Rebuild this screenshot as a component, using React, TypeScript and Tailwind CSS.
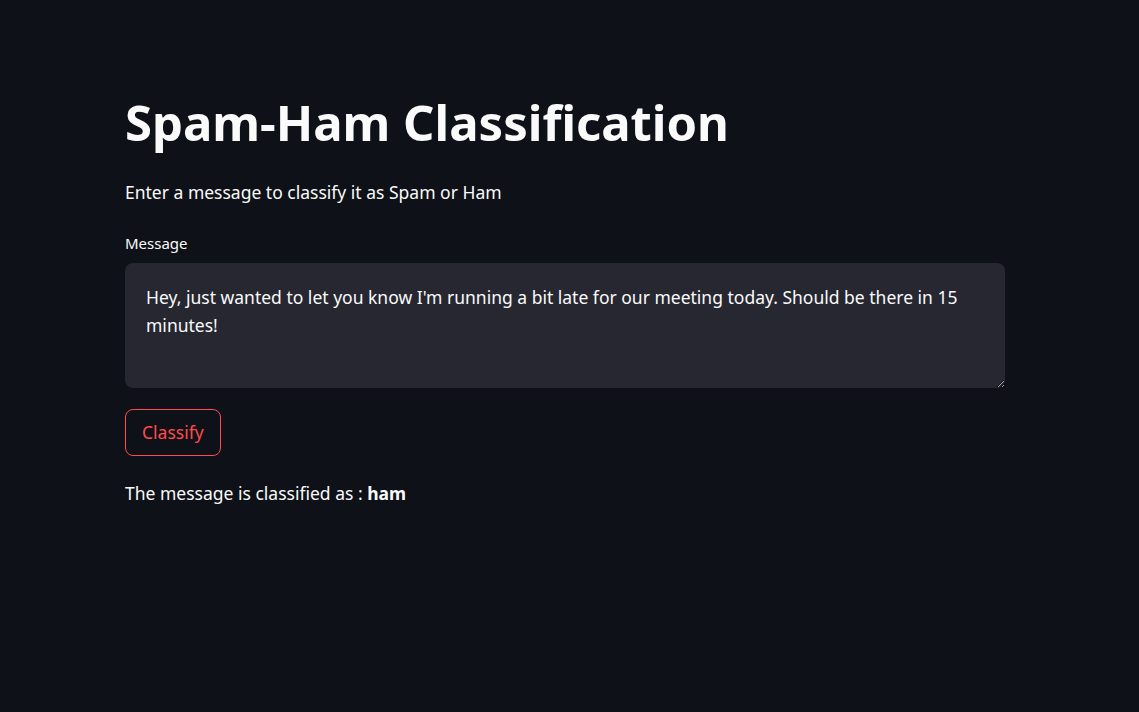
import { useState } from "react";

export default function App() {
    const [message, setMessage] = useState(
        "Hey, just wanted to let you know I'm running a bit late for our meeting today. Should be there in 15 minutes!"
    );

    return (
        <div className="min-h-screen w-full bg-[#0e1117] text-[#fafafa] font-['Noto_Sans','Open_Sans',sans-serif]">
            <div className="w-[880px] ml-[125px] pt-[88px]">
                <h1 className="text-[49px] font-bold leading-[68px] tracking-[0px]">Spam-Ham Classification</h1>

                <p className="mt-[22px] text-[17.5px] leading-[28px]">Enter a message to classify it as Spam or Ham</p>

                <label className="block mt-[27px] text-[15px] leading-[20px]">Message</label>
                <textarea
                    value={message}
                    onChange={(e) => setMessage(e.target.value)}
                    className="mt-[10px] block w-full h-[125px] rounded-lg bg-[#262730] px-[21px] py-[20px] text-[17.5px] leading-[28px] text-[#fafafa] outline-none resize-y"
                />

                <button className="mt-[21px] h-[47px] px-[16px] rounded-lg border border-[#ff4b4b] text-[#ff4b4b] text-[17.5px] bg-transparent">
                    Classify
                </button>

                <p className="mt-[23px] text-[17.5px] leading-[28px]">
                    The message is classified as : <strong className="font-bold">ham</strong>
                </p>
            </div>
        </div>
    );
}
